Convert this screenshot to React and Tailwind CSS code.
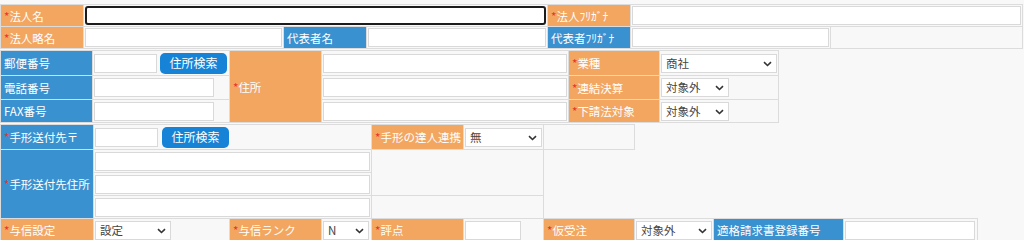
import React from 'react';

const ORANGE = 'bg-[#f2a660]';
const BLUE = 'bg-[#3a91d0]';

// Header cell of the form
const Label = ({ text, req, blue, rowSpan, colSpan }) => (
  <td
    rowSpan={rowSpan}
    colSpan={colSpan}
    className={`border border-[#dcdcdc] ${blue ? BLUE : ORANGE} text-white pl-[3px] pr-0 py-0 text-[11.5px] leading-[16px] whitespace-nowrap overflow-hidden`}
  >
    {req && <span className="text-[#e8322b]">*</span>}
    {text}
  </td>
);

const Cell = ({ children, rowSpan, colSpan }) => (
  <td rowSpan={rowSpan} colSpan={colSpan} className="border border-[#dcdcdc] p-px">
    <div className="flex items-center">{children}</div>
  </td>
);

const TextInput = ({ w = 'w-full', focus }) => (
  <input
    type="text"
    className={`${w} h-[19px] bg-white text-[12px] px-1 outline-none ${
      focus ? 'border-2 border-[#1c1c1c] rounded-[3px]' : 'border border-[#d9d9d9]'
    }`}
  />
);

const Select = ({ value, w }) => (
  <div className={`relative ${w} h-[19px]`}>
    <select
      defaultValue={value}
      className="block appearance-none w-full h-[19px] bg-white border border-[#d9d9d9] pl-[4px] py-0 text-[11.5px] leading-[17px] text-[#444] outline-none"
    >
      <option>{value}</option>
    </select>
    <svg
      className="absolute right-[5px] top-[7px] pointer-events-none"
      width="9"
      height="6"
      viewBox="0 0 9 6"
      fill="none"
    >
      <path d="M1 1.2l3.5 3.3 3.5-3.3" stroke="#333" strokeWidth="1.6" />
    </svg>
  </div>
);

const SearchButton = ({ ml }) => (
  <button
    type="button"
    className={`${ml} h-[21px] w-[67px] rounded-[5px] bg-[#1683d6] text-white text-[12px] leading-[16px]`}
  >
    住所検索
  </button>
);

const Empty = ({ rowSpan, colSpan }) => (
  <td rowSpan={rowSpan} colSpan={colSpan} className="border border-[#dcdcdc] p-0" />
);

const App = () => {
  return (
    <div className="w-[1024px] h-[240px] overflow-hidden bg-[#f8f8f8] pt-1 font-['Noto_Sans_CJK_JP','Noto_Sans',sans-serif]">
      {/* 法人情報 */}
      <table className="border-collapse table-fixed w-[1022px]">
        <colgroup>
          <col className="w-[83px]" />
          <col className="w-[200px]" />
          <col className="w-[83px]" />
          <col className="w-[181px]" />
          <col className="w-[83px]" />
          <col className="w-[200px]" />
          <col className="w-[192px]" />
        </colgroup>
        <tbody>
          <tr className="h-[22px]">
            <Label text="法人名" req />
            <Cell colSpan={3}>
              <TextInput focus />
            </Cell>
            <Label text="法人ﾌﾘｶﾞﾅ" req />
            <Cell colSpan={2}>
              <TextInput />
            </Cell>
          </tr>
          <tr className="h-[22px]">
            <Label text="法人略名" req />
            <Cell>
              <TextInput />
            </Cell>
            <Label text="代表者名" blue />
            <Cell>
              <TextInput />
            </Cell>
            <Label text="代表者ﾌﾘｶﾞﾅ" blue />
            <Cell>
              <TextInput />
            </Cell>
            <Empty />
          </tr>
        </tbody>
      </table>

      {/* 住所・業種 */}
      <table className="border-collapse table-fixed w-[778px] mt-px">
        <colgroup>
          <col className="w-[92px]" />
          <col className="w-[137px]" />
          <col className="w-[92px]" />
          <col className="w-[247px]" />
          <col className="w-[91px]" />
          <col className="w-[119px]" />
        </colgroup>
        <tbody>
          <tr className="h-[25px]">
            <Label text="郵便番号" blue />
            <Cell>
              <TextInput w="w-[63px]" />
              <SearchButton ml="ml-[3px]" />
            </Cell>
            <Label text="住所" req rowSpan={3} />
            <Cell>
              <TextInput />
            </Cell>
            <Label text="業種" req />
            <Cell>
              <Select value="商社" w="w-full" />
            </Cell>
          </tr>
          <tr className="h-[24px]">
            <Label text="電話番号" blue />
            <Cell>
              <TextInput w="w-[120px]" />
            </Cell>
            <Cell>
              <TextInput />
            </Cell>
            <Label text="連結決算" req />
            <Cell>
              <Select value="対象外" w="w-[68px]" />
            </Cell>
          </tr>
          <tr className="h-[23px]">
            <Label text="FAX番号" blue />
            <Cell>
              <TextInput w="w-[120px]" />
            </Cell>
            <Cell>
              <TextInput />
            </Cell>
            <Label text="下請法対象" req />
            <Cell>
              <Select value="対象外" w="w-[68px]" />
            </Cell>
          </tr>
        </tbody>
      </table>

      {/* 手形・与信 */}
      <table className="border-collapse table-fixed w-[977px] mt-px">
        <colgroup>
          <col className="w-[93px]" />
          <col className="w-[136px]" />
          <col className="w-[92px]" />
          <col className="w-[50px]" />
          <col className="w-[92px]" />
          <col className="w-[80px]" />
          <col className="w-[91px]" />
          <col className="w-[79px]" />
          <col className="w-[130px]" />
          <col className="w-[134px]" />
        </colgroup>
        <tbody>
          <tr className="h-[25px]">
            <Label text="手形送付先〒" req blue />
            <Cell colSpan={3}>
              <TextInput w="w-[63px]" />
              <SearchButton ml="ml-[4px]" />
            </Cell>
            <Label text="手形の達人連携" req />
            <Cell>
              <Select value="無" w="w-[77px]" />
            </Cell>
            <Empty />
          </tr>
          <tr className="h-[23px]">
            <Label text="手形送付先住所" req blue rowSpan={3} />
            <Cell colSpan={3}>
              <TextInput />
            </Cell>
            <Empty colSpan={2} rowSpan={2} />
          </tr>
          <tr className="h-[23px]">
            <Cell colSpan={3}>
              <TextInput />
            </Cell>
          </tr>
          <tr className="h-[23px]">
            <Cell colSpan={3}>
              <TextInput />
            </Cell>
            <Empty colSpan={2} />
          </tr>
          <tr className="h-[23px]">
            <Label text="与信設定" req />
            <Cell>
              <Select value="設定" w="w-[76px]" />
            </Cell>
            <Label text="与信ランク" req />
            <Cell>
              <Select value="N" w="w-[46px]" />
            </Cell>
            <Label text="評点" req />
            <Cell>
              <TextInput w="w-[56px]" />
            </Cell>
            <Label text="仮受注" req />
            <Cell>
              <Select value="対象外" w="w-[76px]" />
            </Cell>
            <Label text="適格請求書登録番号" blue />
            <Cell>
              <TextInput w="w-[130px]" />
            </Cell>
          </tr>
        </tbody>
      </table>
    </div>
  );
};

export default App;
